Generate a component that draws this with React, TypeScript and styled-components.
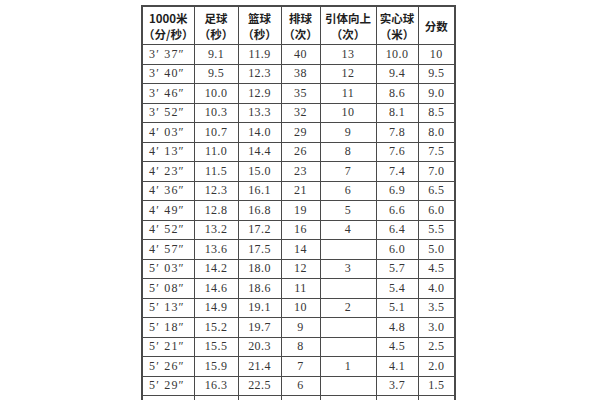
import React from 'react';
import styled, { createGlobalStyle } from 'styled-components';

const GlobalStyle = createGlobalStyle`
  html, body {
    margin: 0;
    padding: 0;
    background: #ffffff;
  }
  body {
    width: 600px;
    height: 400px;
    overflow: hidden;
  }
`;

const Page = styled.main`
  padding: 5px 0 0 141px;
`;

const Table = styled.table`
  border-collapse: collapse;
  table-layout: fixed;
  width: 313px;
  border: 2px solid #4a4a4a;
  color: #353535;
`;

const HeadCell = styled.th`
  height: 37px;
  padding: 0;
  border: 1px solid #4a4a4a;
  font-family: "Noto Sans CJK SC", "Liberation Serif", serif;
  font-size: 11.5px;
  font-weight: 700;
  line-height: 16px;
  color: #1e1e1e;
  text-align: center;
  vertical-align: middle;
`;

const Cell = styled.td<{ $left?: boolean }>`
  height: 18.5px;
  padding: 0 0 0 ${(p) => (p.$left ? '6px' : '0')};
  border: 1px solid #4a4a4a;
  font-family: "Liberation Serif", serif;
  font-size: 12px;
  letter-spacing: ${(p) => (p.$left ? '1.2px' : '0.4px')};
  text-align: ${(p) => (p.$left ? 'left' : 'center')};
  vertical-align: middle;
  white-space: nowrap;
`;

const widths = [52, 44, 43, 39, 56, 42, 37];

const head: [string, string?][] = [
  ['1000米', '（分/秒）'],
  ['足球', '（秒）'],
  ['篮球', '（秒）'],
  ['排球', '（次）'],
  ['引体向上', '（次）'],
  ['实心球', '（米）'],
  ['分数'],
];

const rows: string[][] = [
  ['3′ 37″', '9.1', '11.9', '40', '13', '10.0', '10'],
  ['3′ 40″', '9.5', '12.3', '38', '12', '9.4', '9.5'],
  ['3′ 46″', '10.0', '12.9', '35', '11', '8.6', '9.0'],
  ['3′ 52″', '10.3', '13.3', '32', '10', '8.1', '8.5'],
  ['4′ 03″', '10.7', '14.0', '29', '9', '7.8', '8.0'],
  ['4′ 13″', '11.0', '14.4', '26', '8', '7.6', '7.5'],
  ['4′ 23″', '11.5', '15.0', '23', '7', '7.4', '7.0'],
  ['4′ 36″', '12.3', '16.1', '21', '6', '6.9', '6.5'],
  ['4′ 49″', '12.8', '16.8', '19', '5', '6.6', '6.0'],
  ['4′ 52″', '13.2', '17.2', '16', '4', '6.4', '5.5'],
  ['4′ 57″', '13.6', '17.5', '14', '', '6.0', '5.0'],
  ['5′ 03″', '14.2', '18.0', '12', '3', '5.7', '4.5'],
  ['5′ 08″', '14.6', '18.6', '11', '', '5.4', '4.0'],
  ['5′ 13″', '14.9', '19.1', '10', '2', '5.1', '3.5'],
  ['5′ 18″', '15.2', '19.7', '9', '', '4.8', '3.0'],
  ['5′ 21″', '15.5', '20.3', '8', '', '4.5', '2.5'],
  ['5′ 26″', '15.9', '21.4', '7', '1', '4.1', '2.0'],
  ['5′ 29″', '16.3', '22.5', '6', '', '3.7', '1.5'],
  // the next row is cut off by the bottom of the picture
  ['', '', '', '', '', '', ''],
];

export default function App() {
  return (
    <>
      <GlobalStyle />
      <Page>
        <Table>
          <colgroup>
            {widths.map((w, i) => (
              <col key={i} style={{ width: w }} />
            ))}
          </colgroup>
          <thead>
            <tr>
              {head.map(([a, b], i) => (
                <HeadCell key={i}>
                  {a}
                  {b && (
                    <>
                      <br />
                      {b}
                    </>
                  )}
                </HeadCell>
              ))}
            </tr>
          </thead>
          <tbody>
            {rows.map((r, i) => (
              <tr key={i}>
                {r.map((v, j) => (
                  <Cell key={j} $left={j === 0}>
                    {v}
                  </Cell>
                ))}
              </tr>
            ))}
          </tbody>
        </Table>
      </Page>
    </>
  );
}
